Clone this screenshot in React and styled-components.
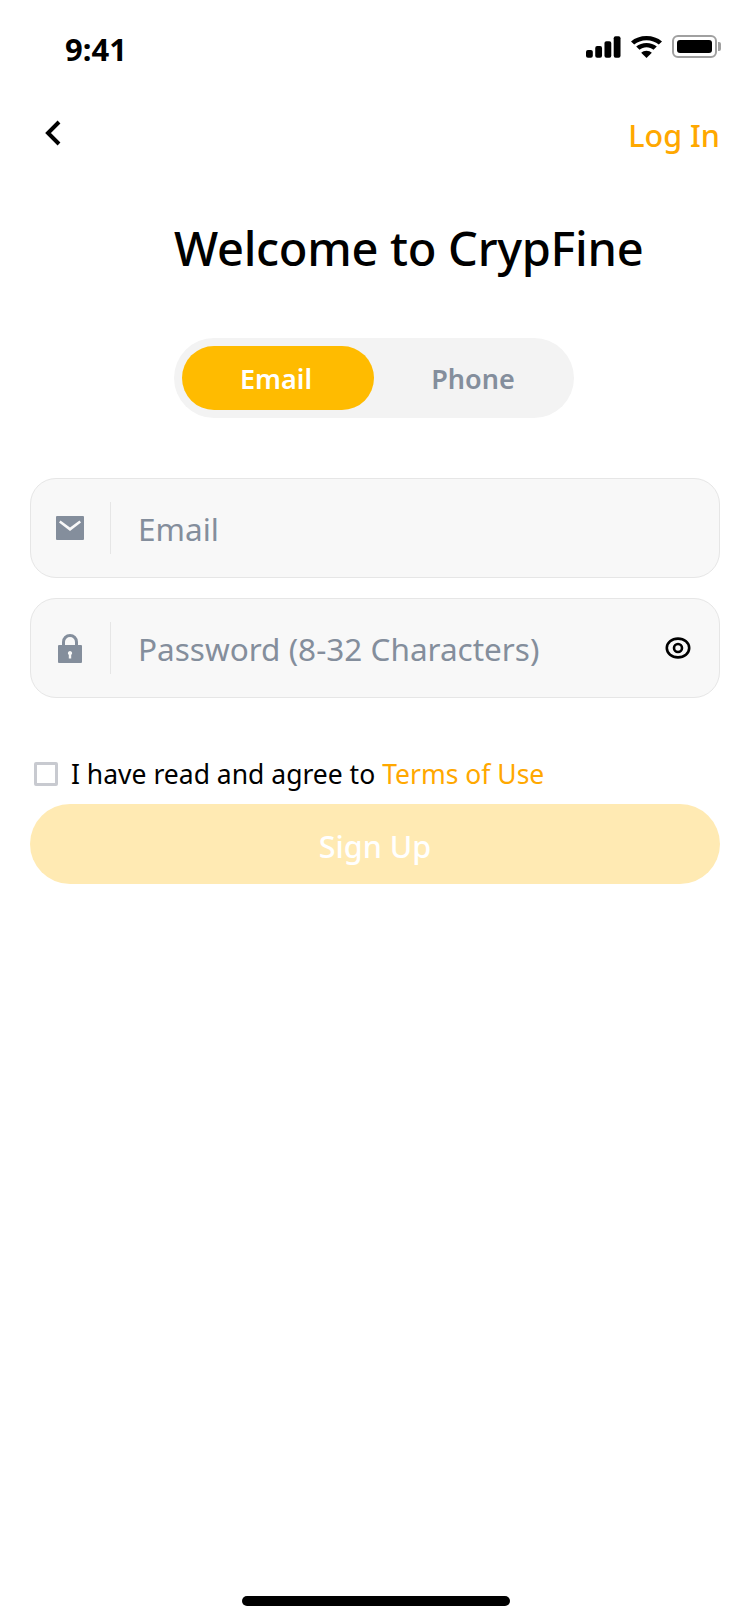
import React from "react";
import styled, { createGlobalStyle } from "styled-components";

const GlobalStyle = createGlobalStyle`
  html, body {
    margin: 0;
    padding: 0;
    background: #ffffff;
  }
  * {
    box-sizing: border-box;
  }
`;

const App = () => {
  return (
    <Screen>
      <GlobalStyle />
      <StatusBar>
        <Time>9:41</Time>
        <StatusIcons>
          <svg width="35" height="22" viewBox="0 0 36 22" fill="#000">
            <rect x="0" y="14" width="7" height="8" rx="2" />
            <rect x="9.5" y="10" width="7" height="12" rx="2" />
            <rect x="19" y="5" width="7" height="17" rx="2" />
            <rect x="28.5" y="0" width="7" height="22" rx="2" />
          </svg>
          <svg width="31" height="22" viewBox="1.5 0 28 22" fill="#000" preserveAspectRatio="none">
            <path d="M15.5 4.2c4.3 0 8.2 1.7 11.1 4.4l2.9-3.2C25.8 1.9 20.9 0 15.5 0S5.200 1.900 1.500 5.400l2.900 3.200C7.300 5.900 11.200 4.200 15.500 4.200z" />
            <path d="M15.500 11.300c2.400 0 4.600.9 6.300 2.400l3-3.200c-2.500-2.300-5.800-3.600-9.300-3.600s-6.800 1.300-9.300 3.600l3 3.200c1.700-1.500 3.900-2.400 6.300-2.400z" />
            <path d="M15.500 22l4.800-5.200c-1.200-1.200-2.900-2-4.800-2s-3.600.8-4.800 2z" />
          </svg>
          <Battery>
            <BatteryFill />
            <BatteryNub />
          </Battery>
        </StatusIcons>
      </StatusBar>

      <NavBar>
        <svg width="18" height="26" viewBox="0 0 18 26" fill="none">
          <path d="M15 2L4 13l11 11" stroke="#000" strokeWidth="4" />
        </svg>
        <LogIn>Log In</LogIn>
      </NavBar>

      <Title>Welcome to CrypFine</Title>

      <Toggle>
        <ToggleOption $active>Email</ToggleOption>
        <ToggleOption>Phone</ToggleOption>
      </Toggle>

      <Form>
        <Field>
          <FieldIcon>
            <svg width="28" height="24" viewBox="0 0 28 24">
              <path
                fillRule="evenodd"
                fill="#848E9C"
                d="M1 0h26a1 1 0 0 1 1 1v22a1 1 0 0 1-1 1H1a1 1 0 0 1-1-1V1a1 1 0 0 1 1-1zm3.500 4.500L3 6.500l11 8.500 11-8.500-1.500-2L14 11.500z"
              />
            </svg>
          </FieldIcon>
          <Placeholder>Email</Placeholder>
        </Field>
        <Field>
          <FieldIcon>
            <svg width="24" height="29" viewBox="0 0 24 29">
              <path
                fill="none"
                stroke="#848E9C"
                strokeWidth="3"
                d="M5.500 12V8a6.500 6.500 0 0 1 13 0v4"
              />
              <path
                fillRule="evenodd"
                fill="#848E9C"
                d="M1 11h22a1 1 0 0 1 1 1v16a1 1 0 0 1-1 1H1a1 1 0 0 1-1-1V12a1 1 0 0 1 1-1zm11 6a2.200 2.200 0 0 0-1.200 4v3.500h2.400V21a2.200 2.200 0 0 0-1.200-4z"
              />
            </svg>
          </FieldIcon>
          <Placeholder>Password (8-32 Characters)</Placeholder>
          <svg width="26" height="22" viewBox="0 0 26 22" fill="none">
            <ellipse cx="13" cy="11" rx="11.200" ry="9.400" stroke="#000" strokeWidth="2.600" />
            <circle cx="13" cy="11" r="4" stroke="#000" strokeWidth="2.600" />
          </svg>
        </Field>
      </Form>

      <Agreement>
        <CheckBox />
        <span>
          I have read and agree to <Link>Terms of Use</Link>
        </span>
      </Agreement>

      <SignUp>Sign Up</SignUp>

      <HomeIndicator />
    </Screen>
  );
};

const Screen = styled.div`
  display: flex;
  flex-direction: column;
  width: 750px;
  height: 1624px;
  padding: 0 30px 18px 30px;
  background: #ffffff;
  color: #000000;
  font-family: "Noto Sans", "Liberation Sans", sans-serif;
`;

const StatusBar = styled.div`
  display: flex;
  align-items: flex-start;
  justify-content: space-between;
  height: 118px;
  padding: 34px 3px 0 35px;
`;

const Time = styled.div`
  font-size: 31px;
  line-height: 30px;
  font-weight: 700;
`;

const StatusIcons = styled.div`
  display: flex;
  align-items: center;
  gap: 10px;
  margin-top: 1px;
`;

const Battery = styled.div`
  position: relative;
  width: 45px;
  height: 23px;
  padding: 3px;
  border: 2px solid #a0a0a0;
  border-radius: 6px;
`;

const BatteryFill = styled.div`
  width: 100%;
  height: 100%;
  background: #000000;
  border-radius: 3px;
`;

const BatteryNub = styled.div`
  position: absolute;
  top: 5px;
  right: -6px;
  width: 3px;
  height: 9px;
  background: #a0a0a0;
  border-radius: 0 2px 2px 0;
`;

const NavBar = styled.div`
  display: flex;
  align-items: center;
  justify-content: space-between;
  height: 30px;
  padding-left: 14px;
`;

const LogIn = styled.div`
  font-size: 30.5px;
  line-height: 36px;
  font-weight: 500;
  color: #ffa800;
  margin-top: 4px;
`;

const Title = styled.h1`
  margin: 70px 0 0 144px;
  font-size: 47px;
  line-height: 60px;
  font-weight: 500;
  letter-spacing: -0.3px;
  white-space: nowrap;
`;

const Toggle = styled.div`
  display: flex;
  align-self: flex-start;
  width: 400px;
  height: 80px;
  margin: 60px 0 0 144px;
  padding: 8px;
  background: #f3f3f3;
  border-radius: 40px;
`;

const ToggleOption = styled.div`
  display: flex;
  align-items: center;
  justify-content: center;
  width: 192px;
  padding: ${props => (props.$active ? "0 4px 0 0" : "0 0 0 6px")};
  border-radius: 32px;
  font-size: 27px;
  font-weight: 600;
  background: ${props => (props.$active ? "#ffbb00" : "transparent")};
  color: ${props => (props.$active ? "#ffffff" : "#848e9c")};
`;

const Form = styled.div`
  display: flex;
  flex-direction: column;
  gap: 20px;
  margin-top: 60px;
`;

const Field = styled.div`
  display: flex;
  align-items: center;
  height: 100px;
  padding-right: 28px;
  background: #f8f8f8;
  border: 1px solid #e6e6e6;
  border-radius: 26px;
`;

const FieldIcon = styled.div`
  display: flex;
  align-items: center;
  justify-content: center;
  width: 80px;
  height: 52px;
  padding-right: 2px;
  border-right: 1px solid #e6e6e6;
`;

const Placeholder = styled.div`
  flex: 1;
  padding-left: 27px;
  font-size: 31.5px;
  color: #848e9c;
`;

const Agreement = styled.div`
  display: flex;
  align-items: center;
  gap: 13px;
  height: 40px;
  margin-top: 56px;
  padding-left: 4px;
  font-size: 26.5px;
`;

const CheckBox = styled.div`
  width: 24px;
  height: 24px;
  border: 3px solid #c8cad0;
  border-radius: 2px;
`;

const Link = styled.span`
  color: #ffa800;
`;

const SignUp = styled.div`
  display: flex;
  align-items: center;
  justify-content: center;
  height: 80px;
  margin-top: 10px;
  padding-top: 3px;
  background: #ffeab3;
  border-radius: 40px;
  color: #ffffff;
  font-size: 30.5px;
  font-weight: 500;
`;

const HomeIndicator = styled.div`
  align-self: flex-start;
  width: 268px;
  height: 10px;
  margin: auto 0 0 212px;
  background: #000000;
  border-radius: 5px;
`;

export default App;
